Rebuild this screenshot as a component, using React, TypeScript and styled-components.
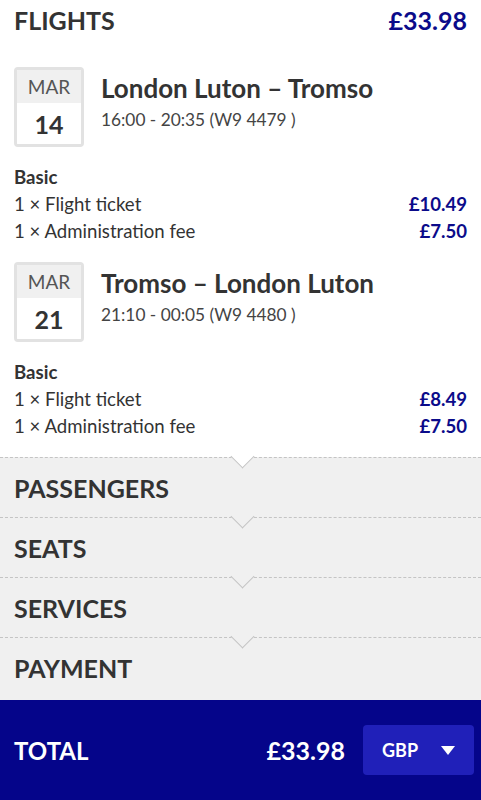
import * as React from 'react';
import styled, { createGlobalStyle } from 'styled-components';

const NAVY = '#0b0b8a';
const TEXT = '#333333';
const STEP_BG = '#f0f0f0';

const GlobalStyle = createGlobalStyle`
  html, body {
    margin: 0;
    padding: 0;
    background: #ffffff;
  }
  body {
    font-family: Lato, "Liberation Sans", sans-serif;
    color: ${TEXT};
  }
`;

const Page = styled.div`
  display: flex;
  flex-direction: column;
  min-height: 100vh;
`;

const FlightsBlock = styled.section`
  padding: 0 14px 17px;
`;

const BlockHeader = styled.div`
  box-sizing: border-box;
  display: flex;
  justify-content: space-between;
  align-items: center;
  height: 50px;
  padding-bottom: 10px;
`;

const BigTitle = styled.h2`
  margin: 0;
  font-size: 25px;
  font-weight: 700;
  text-transform: uppercase;
`;

const BigPrice = styled.span`
  font-size: 25px;
  font-weight: 700;
  color: ${NAVY};
`;

const Segment = styled.div`
  margin-top: 17px;
`;

const FlightRow = styled.div`
  display: flex;
  align-items: flex-start;
  gap: 17px;
`;

const DateBox = styled.div`
  flex: 0 0 auto;
  box-sizing: border-box;
  width: 70px;
  height: 80px;
  border: 3px solid #e2e2e2;
  border-radius: 4px;
  display: flex;
  flex-direction: column;
  overflow: hidden;
`;

const DateMonth = styled.div`
  height: 33px;
  background: #f0f0f0;
  display: flex;
  align-items: center;
  justify-content: center;
  font-size: 19px;
  color: #555555;
`;

const DateDay = styled.div`
  flex: 1;
  display: flex;
  align-items: center;
  justify-content: center;
  font-size: 25px;
  font-weight: 700;
  background: #ffffff;
`;

const FlightInfo = styled.div`
  padding-top: 6px;
`;

const Route = styled.div`
  font-size: 26px;
  font-weight: 700;
  line-height: 30px;
`;

const Times = styled.div`
  font-size: 17.3px;
  line-height: 26px;
  margin-top: 4px;
  color: #444444;
`;

const Fare = styled.div`
  margin-top: 17px;
  font-size: 18.6px;
  line-height: 27px;
`;

const FareName = styled.div`
  font-weight: 700;
`;

const FareLine = styled.div`
  display: flex;
  justify-content: space-between;
`;

const FareAmount = styled.span`
  font-weight: 700;
  color: ${NAVY};
`;

const StepList = styled.div`
  flex: 1;
  background: ${STEP_BG};
`;

const Step = styled.div<{ $above: string }>`
  position: relative;
  box-sizing: border-box;
  height: 60px;
  padding: 0 14px;
  display: flex;
  align-items: center;
  background: ${STEP_BG};
  border-top: 1px dashed #c4c4c4;

  &::before {
    content: '';
    position: absolute;
    left: 234px;
    top: -10px;
    width: 17px;
    height: 17px;
    box-sizing: border-box;
    background: ${p => p.$above};
    border-right: 1px solid #c4c4c4;
    border-bottom: 1px solid #c4c4c4;
    transform: rotate(45deg);
  }
`;

const StepTitle = styled.h3`
  margin: 0;
  font-size: 25px;
  font-weight: 700;
  text-transform: uppercase;
`;

const Footer = styled.footer`
  height: 100px;
  padding: 0 7px 0 14px;
  background: #05058a;
  color: #ffffff;
  display: flex;
  align-items: center;
`;

const TotalLabel = styled.span`
  font-size: 24px;
  font-weight: 700;
  flex: 1;
`;

const TotalPrice = styled.span`
  font-size: 25px;
  font-weight: 700;
  margin-right: 18px;
`;

const CurrencyButton = styled.button`
  box-sizing: border-box;
  width: 111px;
  height: 50px;
  border: none;
  border-radius: 4px;
  background: #2020b9;
  color: #ffffff;
  font-family: inherit;
  font-size: 18px;
  font-weight: 700;
  display: flex;
  align-items: center;
  justify-content: space-between;
  padding: 0 19px 0 19px;
`;

const Caret = styled.span`
  width: 0;
  height: 0;
  border-left: 7px solid transparent;
  border-right: 7px solid transparent;
  border-top: 9px solid #ffffff;
`;

const FLIGHTS = [
  {
    month: 'MAR',
    day: '14',
    route: 'London Luton – Tromso',
    times: '16:00 - 20:35 (W9 4479 )',
    ticket: '£10.49',
    fee: '£7.50',
  },
  {
    month: 'MAR',
    day: '21',
    route: 'Tromso – London Luton',
    times: '21:10 - 00:05 (W9 4480 )',
    ticket: '£8.49',
    fee: '£7.50',
  },
];

const STEPS = ['Passengers', 'Seats', 'Services', 'Payment'];

export default function App() {
  return (
    <Page>
      <GlobalStyle />
      <FlightsBlock>
        <BlockHeader>
          <BigTitle>Flights</BigTitle>
          <BigPrice>£33.98</BigPrice>
        </BlockHeader>
        {FLIGHTS.map(f => (
          <Segment key={f.day}>
            <FlightRow>
              <DateBox>
                <DateMonth>{f.month}</DateMonth>
                <DateDay>{f.day}</DateDay>
              </DateBox>
              <FlightInfo>
                <Route>{f.route}</Route>
                <Times>{f.times}</Times>
              </FlightInfo>
            </FlightRow>
            <Fare>
              <FareName>Basic</FareName>
              <FareLine>
                <span>1 × Flight ticket</span>
                <FareAmount>{f.ticket}</FareAmount>
              </FareLine>
              <FareLine>
                <span>1 × Administration fee</span>
                <FareAmount>{f.fee}</FareAmount>
              </FareLine>
            </Fare>
          </Segment>
        ))}
      </FlightsBlock>
      <StepList>
        {STEPS.map((s, i) => (
          <Step key={s} $above={i === 0 ? '#ffffff' : STEP_BG}>
            <StepTitle>{s}</StepTitle>
          </Step>
        ))}
      </StepList>
      <Footer>
        <TotalLabel>TOTAL</TotalLabel>
        <TotalPrice>£33.98</TotalPrice>
        <CurrencyButton>
          <span>GBP</span>
          <Caret />
        </CurrencyButton>
      </Footer>
    </Page>
  );
}
